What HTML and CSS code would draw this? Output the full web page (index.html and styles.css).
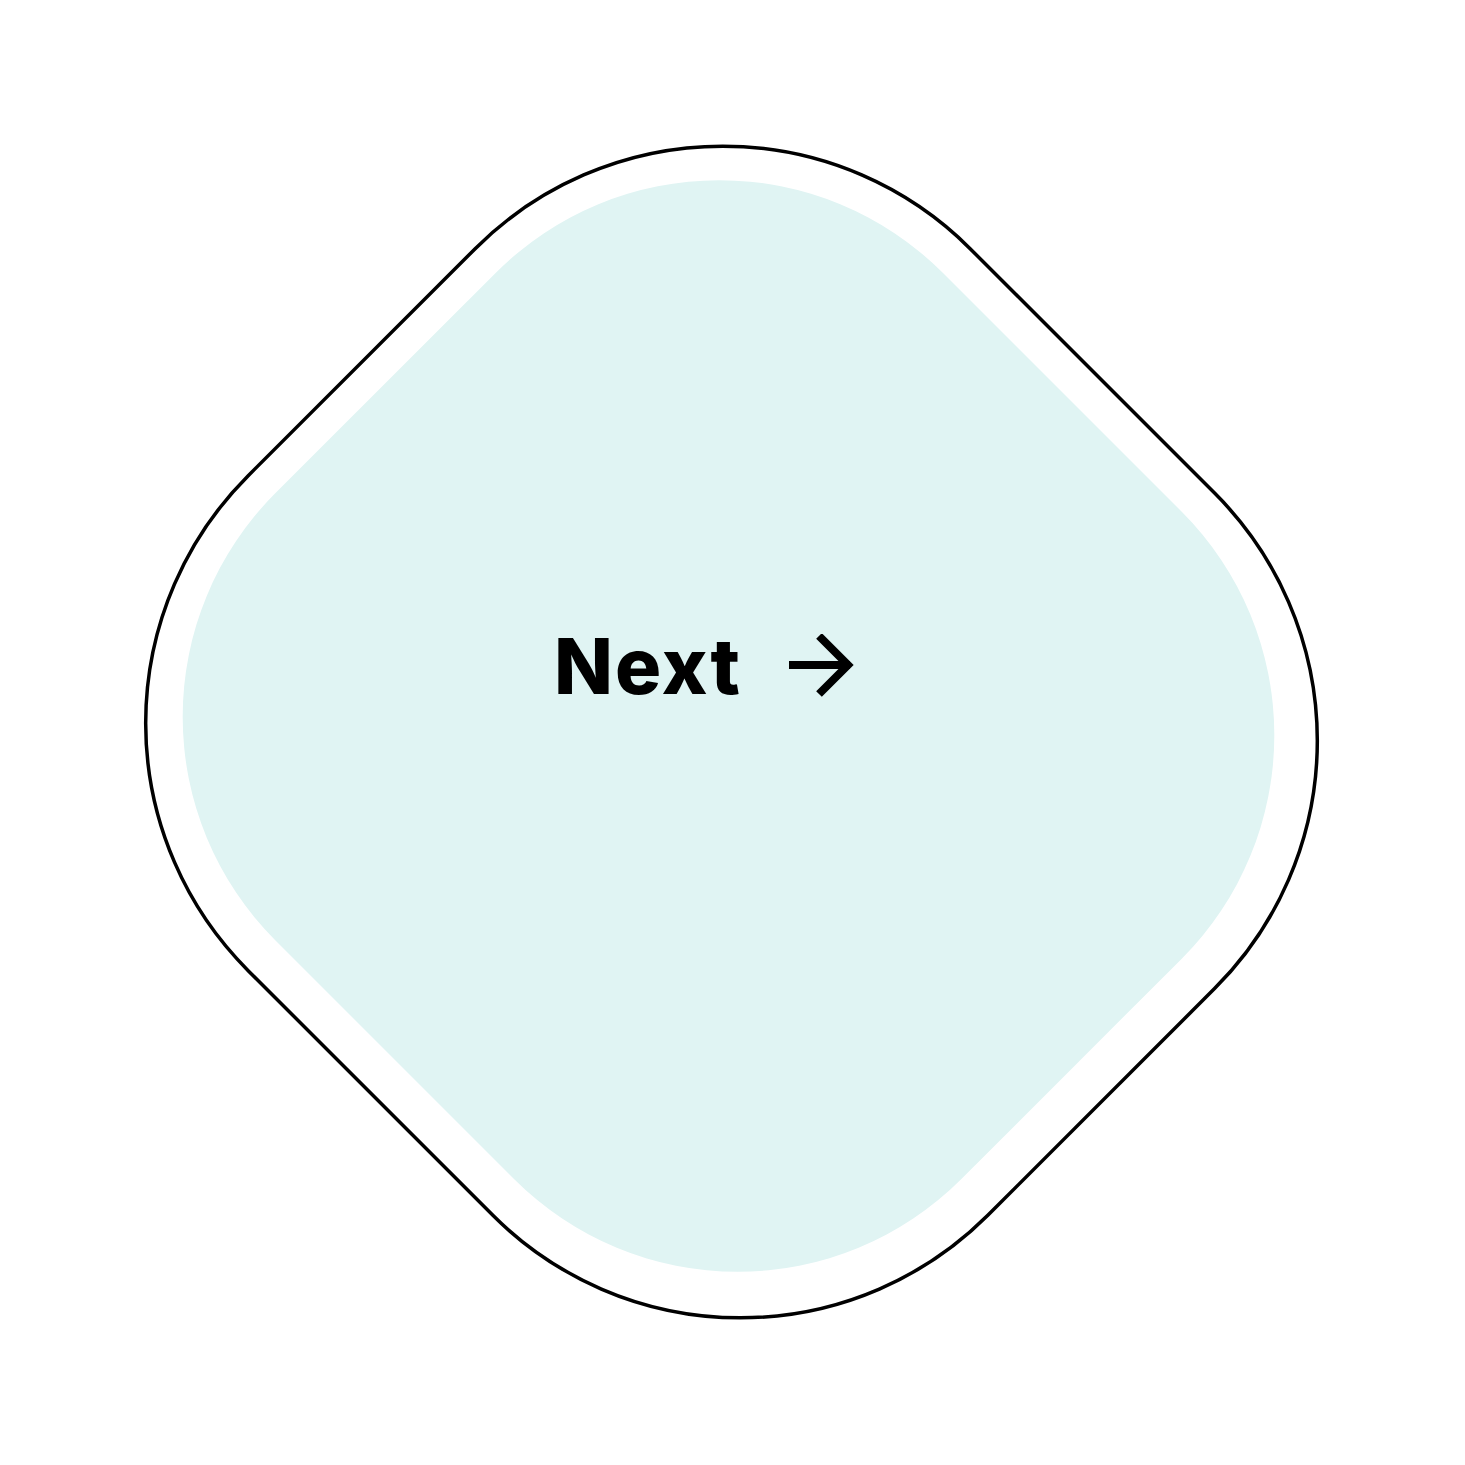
FILE: index.html
```html
<!DOCTYPE html>
<html lang="en">

<head>
    <meta charset="UTF-8">
    <meta name="viewport" content="width=device-width, initial-scale=1.0">
    <title>Next</title>
    <link rel="stylesheet" href="styles.css">
</head>

<body>
    <div class="stage">
        <svg class="blob" viewBox="0 0 1465 1465" width="1465" height="1465">
            <rect class="blob-fill" x="243.5" y="254" width="970" height="944" rx="316" transform="rotate(45 728.5 726)"/>
            <rect class="blob-line" x="208.5" y="221.5" width="1046" height="1021" rx="350" transform="rotate(45 731.5 732)"/>
        </svg>
        <a class="next-btn" href="#">
            <span class="next-text">Next</span>
            <svg class="next-arrow" viewBox="0 0 70 64" width="70" height="64">
                <path d="M1 31H62M31 2L60 31L31 60"/>
            </svg>
        </a>
    </div>
</body>

</html>
```

FILE: styles.css
```css
body {
    margin: 0;
    background: #ffffff;
    font-family: Inter, "Liberation Sans", Arial, sans-serif;
}

.stage {
    position: relative;
    width: 1465px;
    height: 1465px;
}

.blob {
    display: block;
}

.blob-fill {
    fill: #e0f4f3;
}

.blob-line {
    fill: none;
    stroke: #000000;
    stroke-width: 3.5;
}

.next-btn {
    position: absolute;
    left: 554px;
    top: 622px;
    display: flex;
    align-items: center;
    gap: 46px;
    color: #000000;
    text-decoration: none;
}

.next-text {
    font-size: 77px;
    font-weight: 800;
    line-height: 88px;
    letter-spacing: 2px;
}

.next-arrow {
    display: block;
    fill: none;
    stroke: #000000;
    stroke-width: 8;
}
```
